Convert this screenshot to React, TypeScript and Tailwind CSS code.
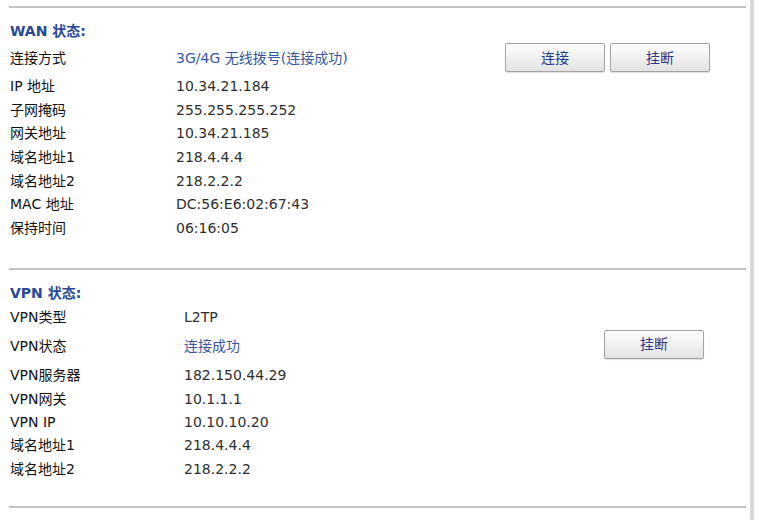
import React from "react";

type Row = { label: string; value: string; blue?: boolean; h: string };

const wanRows: Row[] = [
  { label: "IP 地址", value: "10.34.21.184", h: "h-[24px]" },
  { label: "子网掩码", value: "255.255.255.252", h: "h-[23.6px]" },
  { label: "网关地址", value: "10.34.21.185", h: "h-[23.6px]" },
  { label: "域名地址1", value: "218.4.4.4", h: "h-[23.6px]" },
  { label: "域名地址2", value: "218.2.2.2", h: "h-[23.6px]" },
  { label: "MAC 地址", value: "DC:56:E6:02:67:43", h: "h-[23.6px]" },
  { label: "保持时间", value: "06:16:05", h: "h-[23.6px]" },
];

const vpnRows: Row[] = [
  { label: "VPN服务器", value: "182.150.44.29", h: "h-[26px]" },
  { label: "VPN网关", value: "10.1.1.1", h: "h-[22px]" },
  { label: "VPN IP", value: "10.10.10.20", h: "h-[24px]" },
  { label: "域名地址1", value: "218.4.4.4", h: "h-[23px]" },
  { label: "域名地址2", value: "218.2.2.2", h: "h-[24px]" },
];

function Btn({ children }: { children: React.ReactNode }) {
  return (
    <button className="h-[29px] w-[100px] rounded-[2px] border border-[#a3a3a3] bg-gradient-to-b from-[#fefefe] to-[#e3e3e3] text-[14px] text-[#26388a] shadow-[0_1px_1px_rgba(0,0,0,0.12)]">
      {children}
    </button>
  );
}

function InfoRow({ row, labelW }: { row: Row; labelW: string }) {
  return (
    <div className={`flex items-center ${row.h}`}>
      <div className={`${labelW} pl-px text-[#111111]`}>{row.label}</div>
      <div className={row.blue ? "text-[#3556a3]" : "text-[#2e2e2e]"}>{row.value}</div>
    </div>
  );
}

export default function App() {
  return (
    <div className="flex h-[520px] w-[767px] bg-white text-[14px] leading-none font-['DejaVu_Sans','Noto_Sans_CJK_SC',sans-serif]">
      <div className="w-[750px] pl-[9px] pr-[4px] pt-[6px]">
        {/* WAN */}
        <section className="border-t-2 border-[#c3c3c3]">
          <div className="mt-[12px] flex h-[22px] items-center pl-px text-[14px] font-bold text-[#2a4896]">
            WAN 状态:
          </div>
          <div className="flex h-[32px] items-center">
            <div className="w-[167px] pl-px text-[#111111]">连接方式</div>
            <div className="flex-1 text-[#3556a3]">3G/4G 无线拨号(连接成功)</div>
            <div className="mr-[36px] flex gap-[5px] self-start pt-px">
              <Btn>连接</Btn>
              <Btn>挂断</Btn>
            </div>
          </div>
          {wanRows.map((r) => (
            <InfoRow key={r.label} row={r} labelW="w-[167px]" />
          ))}
        </section>

        {/* VPN */}
        <section className="mt-[28px] border-t-2 border-[#c3c3c3]">
          <div className="mt-[12px] flex h-[22px] items-center pl-px text-[14px] font-bold text-[#2a4896]">
            VPN 状态:
          </div>
          <InfoRow row={{ label: "VPN类型", value: "L2TP", h: "h-[26px]" }} labelW="w-[175px]" />
          <div className="flex h-[32px] items-center">
            <div className="w-[175px] pl-px text-[#111111]">VPN状态</div>
            <div className="flex-1 text-[#3556a3]">连接成功</div>
            <div className="mr-[42px] self-start">
              <Btn>挂断</Btn>
            </div>
          </div>
          {vpnRows.map((r) => (
            <InfoRow key={r.label + r.value} row={r} labelW="w-[175px]" />
          ))}
          <div className="mt-[25px] border-t-2 border-[#c3c3c3]" />
        </section>
      </div>
      <div className="w-[4px] bg-[#d8d8d8]" />
    </div>
  );
}
